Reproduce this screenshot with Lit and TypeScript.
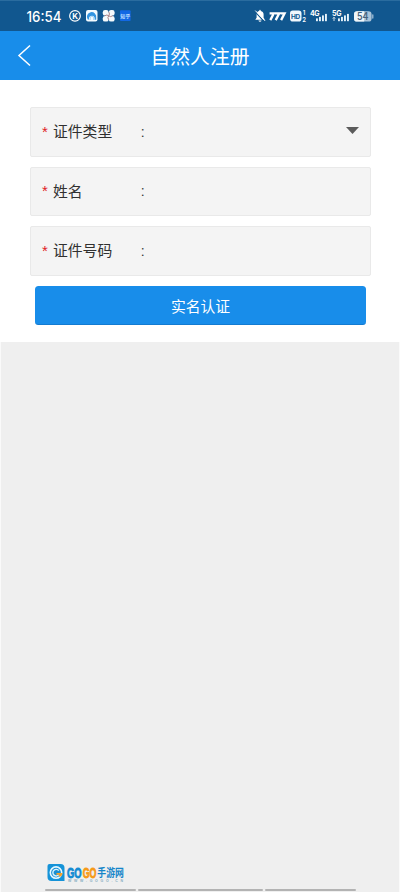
import { LitElement, html, css, svg } from "lit";
import { customElement, property } from "lit/decorators.js";

@customElement("status-bar")
class StatusBar extends LitElement {
  static styles = css`
    :host { display: flex; height: 31px; background: #11578f; border-top: 1px solid #2a6c9f; box-sizing: border-box; }
    svg { display: block; width: 400px; height: 30px; }
    .time { font: 500 14.2px Inter, sans-serif; fill: #fff; }
    .k { font: 700 8px Inter, sans-serif; fill: #fff; }
    .zh { font: 700 5px "Noto Sans CJK SC", sans-serif; fill: #b9dcff; }
    .tiny { font: 700 7px Inter, sans-serif; fill: #fff; }
    .num { font: 600 6px Inter, sans-serif; fill: #fff; }
    .hd { font: 700 6.5px Inter, sans-serif; fill: #11578f; }
    .bat { font: 600 10px Inter, sans-serif; fill: #45627c; }
  `;
  bars(x: number) {
    return svg`${[0, 1, 2, 3].map(
      (i) => svg`<rect x=${x + i * 3} y=${18.4 - i * 1.5} width="1.9" height=${2.8 + i * 1.5} fill="#e6f2fb"/>`
    )}`;
  }
  render() {
    return html`<svg viewBox="0 1 400 30">
      <text class="time" x="26.5" y="21.7" textLength="35" lengthAdjust="spacingAndGlyphs">16:54</text>
      <circle cx="75" cy="15.9" r="5.3" fill="none" stroke="#fff" stroke-width="1.2"/>
      <text class="k" x="72.3" y="18.8">K</text>
      <rect x="86" y="10" width="11.5" height="11.5" rx="2" fill="#f3fbff"/>
      <path d="M87.6 19.3a4.7 4.7 0 1 1 8.6-1.7v2.2h-1.6v-2a2.8 2.8 0 0 0-5.4 2" fill="#3294e0"/>
      <path d="M90.2 20v-2a1.7 1.7 0 0 1 3.4 0v2" fill="none" stroke="#8cc6ee" stroke-width=".7"/>
      <g fill="#f5fafc">
        <rect x="102.8" y="10" width="5.8" height="5.6" rx="2.2"/>
        <rect x="108.8" y="10" width="5.8" height="5.6" rx="2.2"/>
        <rect x="102.8" y="16" width="5.8" height="5.6" rx="2.2"/>
        <rect x="108.8" y="16" width="5.8" height="5.6" rx="2.2"/>
        <circle cx="108.7" cy="15.8" r="3.6"/>
      </g>
      <path d="M108.7 15.8q1.6-1.6 0-4M108.7 15.8q1.6 1.6 4 0M108.7 15.8q-1.6 1.6 0 4M108.7 15.8q-1.6-1.6-4 0" fill="none" stroke="#a4777a" stroke-width=".9"/>
      <rect x="120" y="10.3" width="10.6" height="10.8" rx="1" fill="#1268e4"/>
      <text class="zh" x="120.3" y="17.6">知乎</text>
      <path d="M255.3 19.7l1.3-2v-3.2q.3-3.3 2.6-3.6.1-1.1.8-1.1t.8 1.1q2.8.5 2.8 3.7v3.1l1.3 2zM258.4 20.4h3.2q-.4 1.4-1.6 1.4t-1.6-1.4" fill="#fff"/>
      <path d="M255 11.7l9 9.7" stroke="#11578f" stroke-width="1.2"/>
      <path d="M255.3 10.6l9.8 10.3" stroke="#fff" stroke-width="1"/>
      <path d="M269.6 13.3h4.2l-3.5 6.8M275 13.3h4.2l-3.5 6.8M280.4 13.3h4.2l-3.5 6.8" fill="none" stroke="#fff" stroke-width="2.3"/>
      <rect x="290" y="10.6" width="11.5" height="11" rx="2.8" fill="#f1f8fd"/>
      <text class="hd" x="291.1" y="18.5" textLength="9.2">HD</text>
      <text class="num" x="302.8" y="14.8">1</text>
      <text class="num" x="302.2" y="21.6">2</text>
      <text class="tiny" x="310" y="16" textLength="9.5">4G</text>
      ${this.bars(316)}
      <text class="tiny" x="332" y="16" textLength="9.5">5G</text>
      <path d="M334 21v-3.6m-1.2 1.2l1.2-1.3 1.2 1.3" fill="none" stroke="#fff" stroke-width=".8"/>
      ${this.bars(338)}
      <rect x="354" y="11.3" width="17.6" height="10.3" rx="3.2" fill="#a9c3d9"/>
      <path d="M357.2 11.3h7v10.3h-7a3.2 3.2 0 0 1-3.2-3.2v-3.9a3.2 3.2 0 0 1 3.2-3.2" fill="#eef5fa"/>
      <rect x="372" y="14.3" width="1.5" height="4.4" rx=".7" fill="#8baecb"/>
      <text class="bat" x="357" y="20.2" textLength="11.5" lengthAdjust="spacingAndGlyphs">54</text>
    </svg>`;
  }
}

@customElement("form-field")
class FormField extends LitElement {
  @property() label = "";
  @property({ type: Boolean }) select = false;
  static styles = css`
    :host {
      display: flex; align-items: center; box-sizing: border-box; height: 49.5px;
      border: 1px solid #e9e9e9; border-radius: 2px; background: #f4f4f4;
      padding: 0 11px 1px; font: 15px "Noto Sans CJK SC", sans-serif; color: #303030;
    }
    .star { width: 11px; color: #e02024; font: 15px "Liberation Sans", sans-serif; }
    .label { width: 88px; line-height: 22px; font-size: 14.8px; }
    .colon { flex: 1; font: 14px Roboto, sans-serif; padding-top: 1px; }
    .arrow { width: 13px; height: 7px; margin-top: -1px; fill: #5b5b5b; }
  `;
  render() {
    return html`<span class="star">*</span><span class="label">${this.label}</span><span class="colon">:</span>
      ${this.select ? html`<svg class="arrow" viewBox="0 0 13 7"><path d="M0 0h13L6.5 7z"/></svg>` : ""}`;
  }
}

@customElement("app-root")
class AppRoot extends LitElement {
  static styles = css`
    :host {
      display: flex; flex-direction: column; height: 892px; overflow: hidden;
      background: #efefef; font-family: "Noto Sans CJK SC", sans-serif;
    }
    header {
      display: grid; grid-template-columns: 48px 1fr 48px; align-items: center;
      height: 49px; background: #188dea; color: #fff;
    }
    .back { width: 14px; height: 23px; margin-left: 17px; fill: none; stroke: #fff; stroke-width: 1.5; }
    .title { text-align: center; font-size: 19.8px; line-height: 28px; }
    main {
      display: flex; flex-direction: column; gap: 10px; box-sizing: border-box;
      height: 261.5px; padding: 27px 29.5px 0 30px; background: #fff;
    }
    button {
      height: 39px; margin: 0 4.5px 0 5px; padding: 1px 0 0; border: 0; border-bottom: 1px solid #137bd1;
      border-radius: 3.5px; background: #188dea; color: #fff; font: 14.8px "Noto Sans CJK SC", sans-serif;
    }
    .rest { flex: 1; display: flex; flex-direction: column; justify-content: flex-end;
      border: solid #fafafa; border-width: 0 1px 0 1px; }
    .logo { width: 82px; height: 24px; margin: 0 0 2px 44px; }
    .go { font: 700 15.5px "Liberation Sans", sans-serif; stroke-width: .9; }
    .blue { fill: #128bd2; stroke: #128bd2; }
    .orange { fill: #f79a16; stroke: #f79a16; }
    .cn { font: 700 11.5px "Noto Sans CJK SC", sans-serif; fill: #1685c9; }
    .url { font: 700 3.5px "Liberation Sans", sans-serif; fill: #86adc2; }
    .lines { display: flex; gap: 2px; padding: 0 43px 0 44px; margin-bottom: 1px; }
    .lines i { height: 2px; background: #b3b3b3; border-radius: 1px; }
    .a { width: 91px; } .b { width: 125px; } .c { width: 91px; }
  `;
  render() {
    return html`
      <status-bar></status-bar>
      <header>
        <svg class="back" viewBox="0 0 14 23"><path d="M13 1.5L2 11.5l11 10"/></svg>
        <div class="title">自然人注册</div>
      </header>
      <main>
        <form-field label="证件类型" select></form-field>
        <form-field label="姓名"></form-field>
        <form-field label="证件号码"></form-field>
        <button>实名认证</button>
      </main>
      <div class="rest">
        <svg class="logo" viewBox="45 863 82 24">
          <path d="M49.5 864h11q4 0 4 4v13H51.5q-4 0-4-4v-11q0-2 2-2" fill="#1593d8"/>
          <circle cx="56" cy="872.6" r="5.7" fill="#188fd3" stroke="#e6f8ff" stroke-width="1.6"/>
          <path d="M58.8 870.7a3.3 3.3 0 1 0 0 4" fill="none" stroke="#d9f3ff" stroke-width="1.4"/>
          <path d="M56.5 873h6q0 3.400-3.500 4l.5-2.200h-3z" fill="#f7a12b"/>
          <text class="go blue" x="67" y="877.8" textLength="14.6" lengthAdjust="spacingAndGlyphs">GO</text>
          <text class="go orange" x="82.7" y="877.8" textLength="13.8" lengthAdjust="spacingAndGlyphs">GO</text>
          <text class="cn" x="97.3" y="877" textLength="26.5" lengthAdjust="spacingAndGlyphs">手游网</text>
          <text class="url" x="68" y="882.2" textLength="55">WWW.GOGO.CN</text>
        </svg>
        <div class="lines"><i class="a"></i><i class="b"></i><i class="c"></i></div>
      </div>`;
  }
}
